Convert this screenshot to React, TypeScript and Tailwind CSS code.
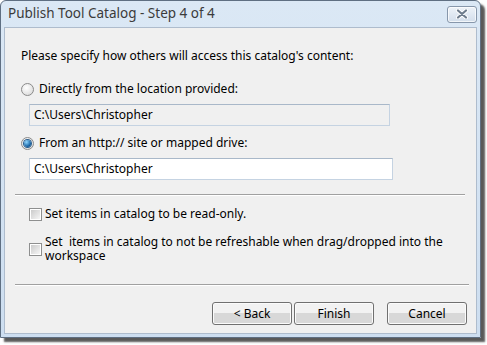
const FONT = "font-['Noto_Sans','Open_Sans',sans-serif]";

function Radio({ checked }: { checked?: boolean }) {
  return (
    <span className="flex h-[13px] w-[13px] shrink-0 items-center justify-center rounded-full border border-[#8a8a8a] bg-[radial-gradient(circle_at_40%_35%,#ffffff,#d4d4d4)]">
      {checked && (
        <span className="h-[7px] w-[7px] rounded-full bg-[radial-gradient(circle_at_35%_30%,#8fd6ff,#0d5a9c_70%,#0a3d6e)] shadow-[0_0_0_1px_#2a5e8e]" />
      )}
    </span>
  );
}

function Checkbox() {
  return (
    <span className="flex h-[13px] w-[13px] shrink-0 items-center justify-center border border-[#8e8f8f] bg-white">
      <span className="h-[9px] w-[9px] bg-gradient-to-br from-[#cbcbcb] to-[#f6f6f6]" />
    </span>
  );
}

function Button({ label }: { label: string }) {
  return (
    <button className="flex h-[23px] w-[80px] items-center justify-center rounded-[3px] border border-[#707070] bg-gradient-to-b from-[#f2f2f2] from-50% to-[#d8d8d8] to-50% text-[12px] text-black shadow-[inset_0_0_0_1px_#fbfbfb]">
      {label}
    </button>
  );
}

export default function App() {
  return (
    <div className={`h-[345px] w-[487px] bg-white ${FONT}`}>
      <div className="flex h-[338px] w-[481px] flex-col rounded-t-[6px] border border-[#5f6f82] bg-gradient-to-b from-[#dbe8f5] to-[#cddef0] shadow-[4px_4px_2px_rgba(0,0,0,0.65)]">
        {/* title bar */}
        <div className="flex h-[26px] shrink-0 items-center justify-between pl-[7px] pr-[3px]">
          <span className="text-[13.5px] leading-none text-[#3b3b3b]">
            Publish Tool Catalog - Step 4 of 4
          </span>
          <div className="flex h-[17px] w-[30px] items-center justify-center rounded-[3px] border border-[#8797ab] bg-gradient-to-b from-[#eef3f9] to-[#d3deeb] shadow-[inset_0_0_0_1px_rgba(255,255,255,0.7)]">
            <svg width="12" height="10" viewBox="0 0 12 10">
              <path d="M2 1.5 L10 8.5 M10 1.5 L2 8.5" stroke="#ffffff" strokeWidth="4" strokeLinecap="round" />
              <path d="M2 1.5 L10 8.5 M10 1.5 L2 8.5" stroke="#6e7c8c" strokeWidth="2.2" strokeLinecap="round" />
            </svg>
          </div>
        </div>

        {/* client area */}
        <div className="mx-[3px] mb-[3px] flex flex-1 flex-col border border-[#aebccd] bg-[#f0f0f0] text-[12px] leading-[14px] text-black">
          <p className="ml-[16px] mt-[21px]">Please specify how others will access this catalog's content:</p>

          <label className="ml-[16px] mt-[19px] flex items-center gap-[5px]">
            <Radio />
            <span>Directly from the location provided:</span>
          </label>
          <div className="ml-[24px] mt-[8px] flex h-[22px] w-[361px] items-center border border-[#c5d3e2] border-t-[#a9b8c9] bg-[#f0f0f0] px-[4px]">
            C:\Users\Christopher
          </div>

          <label className="ml-[16px] mt-[10px] flex items-center gap-[5px]">
            <Radio checked />
            <span>From an http:// site or mapped drive:</span>
          </label>
          <div className="ml-[24px] mt-[8px] flex h-[22px] w-[364px] items-center border border-[#c5d3e2] border-t-[#a9b8c9] bg-white px-[4px]">
            C:\Users\Christopher
          </div>

          <div className="ml-[10px] mt-[14px] h-px w-[450px] bg-[#a0a0a0] shadow-[0_1px_0_#ffffff]" />

          <label className="ml-[24px] mt-[12px] flex items-center gap-[3px]">
            <Checkbox />
            <span>Set items in catalog to be read-only.</span>
          </label>

          <label className="ml-[24px] mt-[14px] flex items-center gap-[3px]">
            <Checkbox />
            <span className="w-[402px]">
              Set&nbsp; items in catalog to not be refreshable when drag/dropped into the workspace
            </span>
          </label>

          <div className="ml-[10px] mt-[21px] h-px w-[454px] bg-[#a0a0a0] shadow-[0_1px_0_#ffffff]" />

          <div className="ml-[207px] mt-[17px] flex">
            <Button label="< Back" />
            <span className="ml-[2px]" />
            <Button label="Finish" />
            <span className="ml-[13px]" />
            <Button label="Cancel" />
          </div>
        </div>
      </div>
    </div>
  );
}
